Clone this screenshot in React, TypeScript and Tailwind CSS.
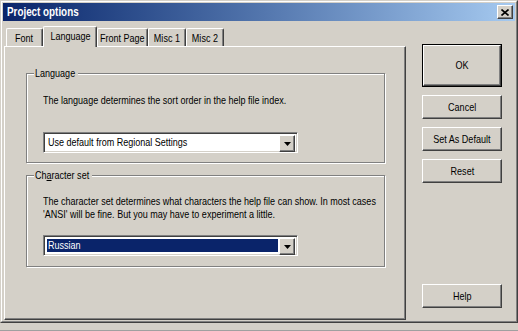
import React from 'react';

const font = "font-['Liberation_Sans',Arial,sans-serif]";

const raised =
  'border border-t-white border-l-white border-r-[#404040] border-b-[#404040] shadow-[inset_-1px_-1px_0_#808080]';
const sunken =
  'border border-t-[#808080] border-l-[#808080] border-r-white border-b-white shadow-[inset_1px_1px_0_#404040,inset_-1px_-1px_0_#d4d0c8]';

// the dialog font is a narrow sans; squeeze Liberation Sans to that width
const T = ({ children, center }: { children: React.ReactNode; center?: boolean }) => (
  <span
    className={`inline-block whitespace-nowrap scale-x-[0.82] ${center ? 'origin-center' : 'origin-left'}`}
  >
    {children}
  </span>
);

const tabs = [
  { label: 'Font', w: 'w-[37px]' },
  { label: 'Language', w: 'w-[54px]', active: true },
  { label: 'Front Page', w: 'w-[51px]' },
  { label: 'Misc 1', w: 'w-[38px]' },
  { label: 'Misc 2', w: 'w-[38px]' },
];

const Arrow = () => (
  <div className={`w-[16px] h-[17px] bg-[#d4d0c8] flex items-center justify-center ${raised}`}>
    <svg width="7" height="4" viewBox="0 0 7 4">
      <polygon points="0,0 7,0 3.5,4" fill="#000" />
    </svg>
  </div>
);

const Combo = ({ value, selected }: { value: string; selected?: boolean }) => (
  <div className={`w-[255px] h-[21px] bg-white p-[2px] flex ${sunken}`}>
    <div className="flex-1 p-[1px] flex overflow-hidden">
      <div
        className={`flex-1 flex items-center pl-[1px] text-[11px] leading-none ${
          selected ? 'bg-[#0a246a] text-white' : 'text-black'
        }`}
      >
        <T>{value}</T>
      </div>
    </div>
    <Arrow />
  </div>
);

const Group = ({
  label,
  labelW,
  className,
  children,
}: {
  label: React.ReactNode;
  labelW: string;
  className: string;
  children: React.ReactNode;
}) => (
  <div
    className={`relative w-[359px] border border-[#808080] shadow-[inset_1px_1px_0_#fff,1px_1px_0_#fff] pl-[16px] ${className}`}
  >
    <span
      className={`absolute -top-[7px] left-[7px] ${labelW} pl-[1px] bg-[#d4d0c8] text-[11px] leading-[13px] flex`}
    >
      <T>{label}</T>
    </span>
    {children}
  </div>
);

const Button = ({ label, className = '' }: { label: string; className?: string }) => (
  <div
    className={`w-[80px] h-[24px] bg-[#d4d0c8] flex items-center justify-center text-[11px] ${raised} ${className}`}
  >
    <T center>{label}</T>
  </div>
);

export default function App() {
  return (
    <div className={`w-[518px] h-[331px] bg-[#d4d0c8] overflow-hidden flex flex-col text-black ${font}`}>
      {/* window frame */}
      <div className="h-[323px] flex flex-col border border-t-[#d4d0c8] border-l-[#d4d0c8] border-r-[#404040] border-b-[#404040]">
        <div className="flex-1 flex flex-col border border-t-white border-l-white border-r-[#808080] border-b-[#808080] p-[1px]">
          {/* caption */}
          <div className="h-[18px] bg-linear-to-r from-[#0a246a] to-[#a6caf0] flex items-center justify-between pl-[4px] pr-[2px]">
            <span className="text-white font-bold text-[12px] leading-none">
              <T>Project options</T>
            </span>
            <div className={`w-[16px] h-[14px] bg-[#d4d0c8] flex items-center justify-center ${raised}`}>
              <svg width="8" height="7" viewBox="0 0 8 7">
                <path d="M0.5 0.5 L7.5 6.5 M7.5 0.5 L0.5 6.5" stroke="#000" strokeWidth="1.6" />
              </svg>
            </div>
          </div>

          {/* body */}
          <div className="flex-1 flex">
            <div className="ml-[1px] w-[402px] flex flex-col pt-[5px]">
              <div className="h-[20px] flex items-end pl-[2px] relative z-10">
                {tabs.map((t) =>
                  t.active ? (
                    <div
                      key={t.label}
                      className={`${t.w} h-[21px] -mb-px bg-[#d4d0c8] border-t border-l border-r border-t-white border-l-white border-r-[#404040] shadow-[inset_-1px_0_0_#808080] rounded-t-[2px] flex justify-center pt-[3px] text-[11px] leading-[13px]`}
                    >
                      <T center>{t.label}</T>
                    </div>
                  ) : (
                    <div
                      key={t.label}
                      className={`${t.w} h-[18px] bg-[#d4d0c8] border-t border-l border-r border-t-white border-l-white border-r-[#404040] shadow-[inset_-1px_0_0_#808080] rounded-t-[2px] flex justify-center pt-[3px] text-[11px] leading-[13px]`}
                    >
                      <T center>{t.label}</T>
                    </div>
                  )
                )}
              </div>

              {/* tab page */}
              <div className={`flex-1 bg-[#d4d0c8] pl-[21px] pt-[26px] ${raised}`}>
                <Group
                  label={
                    <>
                      Lan<span className="underline">g</span>uage
                    </>
                  }
                  labelW="w-[44px]"
                  className="h-[90px] pt-[20px]"
                >
                  <div className="text-[11px] leading-[13px]">
                    <T>The language determines the sort order in the help file index.</T>
                  </div>
                  <div className="mt-[25px]">
                    <Combo value="Use default from Regional Settings" />
                  </div>
                </Group>

                <Group
                  label={
                    <>
                      Ch<span className="underline">a</span>racter set
                    </>
                  }
                  labelW="w-[58px]"
                  className="mt-[12px] h-[92px] pt-[19px]"
                >
                  <div className="text-[11px] leading-[13px] flex flex-col">
                    <T>The character set determines what characters the help file can show. In most cases</T>
                    <T>'ANSI' will be fine. But you may have to experiment a little.</T>
                  </div>
                  <div className="mt-[14px]">
                    <Combo value="Russian" selected />
                  </div>
                </Group>
              </div>
            </div>

            {/* buttons */}
            <div className="ml-[16px] w-[80px] flex flex-col pt-[23px] pb-[12px]">
              <div className="w-[80px] h-[43px] border border-black">
                <div className={`w-full h-full bg-[#d4d0c8] flex items-center justify-center text-[11px] ${raised}`}>
                  <T center>OK</T>
                </div>
              </div>
              <Button label="Cancel" className="mt-[8px]" />
              <Button label="Set As Default" className="mt-[8px]" />
              <Button label="Reset" className="mt-[8px]" />
              <Button label="Help" className="mt-auto" />
            </div>
          </div>
        </div>
      </div>
      <div className="flex-1 border-b border-[#a0a0a0]" />
    </div>
  );
}
